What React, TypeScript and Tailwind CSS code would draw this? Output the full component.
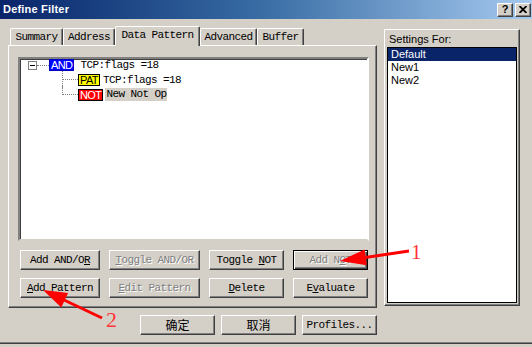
import type { ReactNode } from "react";

const raised =
  "border border-t-white border-l-white border-r-[#404040] border-b-[#404040] shadow-[inset_-1px_-1px_0_#808080]";
const mono = "font-['Liberation_Mono',monospace] text-[11px] tracking-[-0.6px]";
const cjk = "font-['Noto_Sans_CJK_SC',sans-serif] text-[12px]";

function Btn({
  children,
  disabled,
  isDefault,
  className = "",
}: {
  children: ReactNode;
  disabled?: boolean;
  isDefault?: boolean;
  className?: string;
}) {
  const frame = isDefault
    ? "border border-black shadow-[inset_1px_1px_0_#fff,inset_-1px_-1px_0_#404040,inset_-2px_-2px_0_#808080]"
    : raised;
  return (
    <div
      className={`h-[20px] flex items-center justify-center bg-[#d4d0c8] whitespace-pre ${frame} ${
        disabled ? "text-[#808080] [text-shadow:1px_1px_0_#fff]" : "text-black"
      } ${className}`}
    >
      <span>{children}</span>
    </div>
  );
}

function Tab({ label, width, active }: { label: string; width: string; active?: boolean }) {
  return (
    <div
      className={`${width} ${
        active ? "h-[20px] -mb-px relative z-10 pb-[2px]" : "h-[17px]"
      } flex items-center justify-center bg-[#d4d0c8] rounded-t-[2px] border-l border-t border-r border-l-white border-t-white border-r-[#404040] shadow-[inset_-1px_0_0_#808080] ${mono}`}
    >
      {label}
    </div>
  );
}

function Badge({ label, tone }: { label: string; tone: "and" | "pat" | "not" }) {
  const colors = {
    and: "bg-[#0000ff] text-white border-[#0000c0]",
    pat: "bg-[#ffff00] text-black border-black",
    not: "bg-[#ff0000] text-white border-black",
  }[tone];
  return (
    <span
      className={`h-[12px] px-[1px] border flex items-center text-[11px] leading-none font-['Liberation_Sans',sans-serif] ${colors}`}
    >
      {label}
    </span>
  );
}

function Connector({ last }: { last?: boolean }) {
  return (
    <svg width="16" height="18" className="-mt-[3px] shrink-0" shapeRendering="crispEdges">
      <line
        x1="0.5"
        y1="0"
        x2="0.5"
        y2={last ? 9 : 18}
        stroke="#808080"
        strokeDasharray="1 1"
      />
      <line x1="1" y1="8.5" x2="16" y2="8.5" stroke="#808080" strokeDasharray="1 1" />
    </svg>
  );
}

function TitleButton({ children }: { children: ReactNode }) {
  return (
    <div className={`w-[16px] h-[14px] flex items-center justify-center bg-[#d4d0c8] ${raised}`}>
      {children}
    </div>
  );
}

export default function App() {
  return (
    <div className="relative w-[532px] h-[347px] bg-[#d4d0c8] overflow-hidden flex flex-col font-['Liberation_Sans',sans-serif]">
      {/* title bar */}
      <div className="h-[19px] shrink-0 flex items-center pl-[3px] pr-[1px] bg-gradient-to-r from-[#0a246a] via-[#3a6ea5] to-[#a6caf0]">
        <span className="text-white font-bold text-[11px] tracking-[0.2px]">Define Filter</span>
        <div className="ml-auto flex gap-[2px]">
          <TitleButton>
            <span className="text-[11px] font-bold leading-none text-black">?</span>
          </TitleButton>
          <TitleButton>
            <svg width="8" height="7" viewBox="0 0 8 7">
              <path d="M0.5 0 L7.5 7 M7.5 0 L0.5 7" stroke="black" strokeWidth="1.8" />
            </svg>
          </TitleButton>
        </div>
      </div>

      <div className="h-[323px] shrink-0 flex">
        {/* left: tabbed panel + dialog buttons */}
        <div className="ml-[8px] w-[369px] flex flex-col">
          <div className="h-[26px] pt-[7px] flex items-end pl-[2px]">
            <Tab label="Summary" width="w-[53px]" />
            <Tab label="Address" width="w-[52px]" />
            <Tab label="Data Pattern" width="w-[85px]" active />
            <Tab label="Advanced" width="w-[57px]" />
            <Tab label="Buffer" width="w-[47px]" />
          </div>

          <div className={`h-[263px] pl-[9px] pt-[11px] ${raised}`}>
            {/* tree view */}
            <div className="w-[351px] h-[184px] bg-white border-2 border-t-[#808080] border-l-[#808080] border-r-white border-b-[#d4d0c8] shadow-[inset_1px_1px_0_#404040]">
              <div className={`flex flex-col ${mono} text-black`}>
                <div className="h-[15px] flex items-start pl-[8px]">
                  <span className="mt-[2px] w-[9px] h-[9px] border border-[#808080] bg-white flex items-center justify-center shrink-0">
                    <span className="w-[5px] h-px bg-black" />
                  </span>
                  <span className="mt-[6px] w-[12px] border-t border-dotted border-[#808080]" />
                  <Badge label="AND" tone="and" />
                  <span className="ml-[6px] leading-[12px]">TCP:flags =18</span>
                </div>
                <div className="h-[15px] flex items-start pl-[42px]">
                  <Connector />
                  <Badge label="PAT" tone="pat" />
                  <span className="ml-[3px] leading-[12px]">TCP:flags =18</span>
                </div>
                <div className="h-[15px] flex items-start pl-[42px]">
                  <Connector last />
                  <Badge label="NOT" tone="not" />
                  <span className="ml-[2px] -mt-px h-[13px] px-[1px] bg-[#d4d0c8] leading-[13px]">New Not Op</span>
                </div>
              </div>
            </div>

            {/* action buttons */}
            <div className={`mt-[9px] ml-[2px] grid grid-cols-[80px_91px_75px_75px] gap-x-[9px] gap-y-[8px] ${mono}`}>
              <Btn>
                Add AND/O<span className="underline">R</span>
              </Btn>
              <Btn disabled>
                <span className="underline">T</span>oggle AND/OR
              </Btn>
              <Btn>
                Toggle <span className="underline">N</span>OT
              </Btn>
              <Btn disabled isDefault>
                Add N<span className="underline">O</span>T
              </Btn>
              <Btn>
                <span className="underline">A</span>dd Pattern
              </Btn>
              <Btn disabled>
                <span className="underline">E</span>dit Pattern
              </Btn>
              <Btn>
                <span className="underline">D</span>elete
              </Btn>
              <Btn>
                E<span className="underline">v</span>aluate
              </Btn>
            </div>
          </div>

          <div className="mt-[7px] flex justify-end gap-[6px]">
            <Btn className={`w-[75px] ${cjk}`}>确定</Btn>
            <Btn className={`w-[75px] ${cjk}`}>取消</Btn>
            <Btn className={`w-[75px] ${mono}`}>Profiles...</Btn>
          </div>
        </div>

        {/* right: settings group */}
        <div className={`ml-[7px] mt-[10px] w-[136px] h-[277px] flex flex-col ${raised}`}>
          <div className="h-[17px] pl-[4px] pt-[4px] text-[11px] leading-none text-black">Settings For:</div>
          <div className="mx-[2px] h-[256px] bg-white border border-black text-[11px]">
            <div className="h-[13px] pl-[3px] bg-[#0a246a] text-white leading-[13px]">Default</div>
            <div className="h-[13px] pl-[3px] text-black leading-[13px]">New1</div>
            <div className="h-[13px] pl-[3px] text-black leading-[13px]">New2</div>
          </div>
        </div>
      </div>

      {/* window bottom frame */}
      <div className="h-[1px] bg-[#808080]" />
      <div className="h-[1px] bg-[#404040]" />

      {/* annotations drawn over the screenshot */}
      <svg className="absolute inset-0 pointer-events-none" width="532" height="347">
        <line x1="409" y1="251" x2="362" y2="258" stroke="#ff0000" strokeWidth="3" />
        <polygon points="340,261 364.6,249.4 366.8,265.2" fill="#ff0000" />
        <text x="411" y="259" fill="#ff3333" fontSize="21" fontFamily="Liberation Serif, serif">
          1
        </text>
        <line x1="102" y1="318" x2="63" y2="299.5" stroke="#ff0000" strokeWidth="3" />
        <polygon points="43,290 68.1,293.1 61.3,307.5" fill="#ff0000" />
        <text x="106" y="327" fill="#ff3333" fontSize="22" fontFamily="Liberation Serif, serif">
          2
        </text>
      </svg>
    </div>
  );
}
